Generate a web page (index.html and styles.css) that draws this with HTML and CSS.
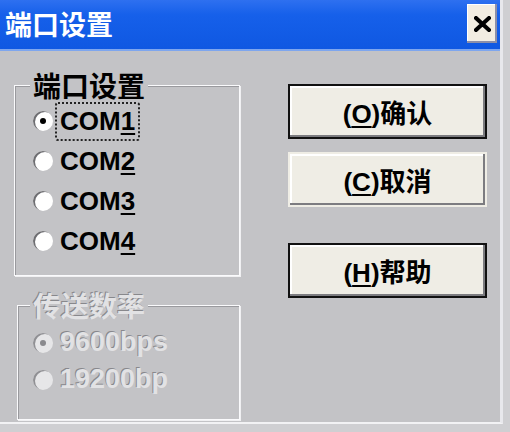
FILE: index.html
```html
<!DOCTYPE html>
<html lang="zh">
<head>
  <meta charset="UTF-8" />
  <title>端口设置</title>
  <link rel="stylesheet" href="styles.css">
</head>
<body>
  <div class="window">
    <div class="titlebar">
      <span class="title">端口设置</span>
      <button class="close" aria-label="关闭">
        <svg width="17" height="16" viewBox="0 0 17 16"><path d="M2 2 L15 14 M15 2 L2 14" stroke="#000" stroke-width="4" stroke-linecap="square"/></svg>
      </button>
    </div>

    <div class="client">
      <div class="groups">
        <fieldset class="group ports">
          <legend>端口设置</legend>
          <label class="opt"><span class="radio checked"></span><span class="text focus">COM<u>1</u></span></label>
          <label class="opt"><span class="radio"></span><span class="text">COM<u>2</u></span></label>
          <label class="opt"><span class="radio"></span><span class="text">COM<u>3</u></span></label>
          <label class="opt"><span class="radio"></span><span class="text">COM<u>4</u></span></label>
        </fieldset>

        <fieldset class="group rates disabled">
          <legend>传送数率</legend>
          <label class="opt"><span class="radio checked"></span><span class="text">9600bps</span></label>
          <label class="opt"><span class="radio"></span><span class="text">19200bp</span></label>
        </fieldset>
      </div>

      <div class="buttons">
        <button class="btn dark">(<u>O</u>)确认</button>
        <button class="btn">(<u>C</u>)取消</button>
        <button class="btn dark help">(<u>H</u>)帮助</button>
      </div>
    </div>
  </div>
</body>
</html>
```

FILE: styles.css
```css
* {
  box-sizing: border-box;
}
body {
  margin: 0;
  background: #cfcfd2;
  font-family: 'Liberation Sans', 'Noto Sans CJK SC', sans-serif;
  font-weight: 700;
  color: #000;
}
.window {
  width: 503px;
  height: 424px;
  background: #c3c3c6;
  border-right: 3px solid #e8e8ec;
  border-bottom: 2px solid #f2f2f4;
}
.titlebar {
  height: 51px;
  display: flex;
  align-items: flex-start;
  justify-content: space-between;
  background: linear-gradient(#2e70f0, #1660ea 30%, #0f58e2);
  border-bottom: 2px solid #7ea6ee;
  padding: 4px 3px 0 5px;
}
.title {
  color: #fff;
  font-family: 'Noto Sans CJK SC', sans-serif;
  font-size: 27px;
  line-height: 40px;
  font-weight: 700;
}
.close {
  width: 30px;
  height: 39px;
  padding: 0;
  border: none;
  background: #f2ede2;
  box-shadow: inset -2px -2px 0 #8c8fa8, inset 1px 1px 0 #fff;
  display: flex;
  align-items: center;
  justify-content: center;
}
.client {
  display: flex;
  padding-left: 14px;
}
.groups {
  width: 226px;
  padding-top: 19px;
}
.group {
  margin: 0;
  border: 1px solid #fafafc;
  box-shadow: inset 1px 1px 0 #9a9a9e, 1px 1px 0 #f0f0f2;
  padding: 1px 0 14px 18px;
}
.group legend {
  font-family: 'Noto Sans CJK SC', sans-serif;
  font-size: 28px;
  line-height: 30px;
  padding: 0 3px;
  margin-left: -3px;
  background: #c3c3c6;
}
.rates {
  margin: 15px 0 0 3px;
  padding: 5px 0 21px 15px;
}
.rates legend {
  line-height: 28px;
}
.opt {
  display: flex;
  align-items: center;
  height: 40px;
  gap: 2px;
  font-size: 26px;
}
.rates .opt {
  height: 37px;
  font-size: 27px;
}
.radio {
  width: 20px;
  height: 20px;
  border-radius: 50%;
  background: #fff;
  box-shadow: inset 2px 1px 0 #6e6e72;
  display: flex;
  align-items: center;
  justify-content: center;
}
.radio.checked::after {
  content: '';
  width: 6px;
  height: 6px;
  border-radius: 50%;
  background: #000;
}
.text {
  height: 39px;
  line-height: 35px;
  padding: 0 3px;
  border: 2px dotted transparent;
}
.text u {
  text-underline-offset: 3px;
  text-decoration-thickness: 2px;
}
.text.focus {
  border-color: #222;
  border-radius: 3px;
}
.disabled legend,
.disabled .text {
  color: #e2e2e4;
  text-shadow: -1px -1px 0 #88888c;
}
.disabled .radio {
  background: #e6e6e8;
  box-shadow: inset 2px 1px 0 #909094;
}
.disabled .radio.checked::after {
  background: #8a8a8e;
}
.buttons {
  display: flex;
  flex-direction: column;
  gap: 13px;
  margin-left: 48px;
  padding-top: 33px;
}
.btn {
  width: 199px;
  height: 55px;
  padding: 0;
  border: 2px solid transparent;
  background: #efede5;
  box-shadow: inset -2px -2px 0 #7c7c80, inset 2px 2px 0 #fff;
  font-family: 'Liberation Sans', 'Noto Sans CJK SC', sans-serif;
  font-weight: 700;
  font-size: 26px;
  color: #000;
}
.btn.dark {
  border-color: #111;
}
.btn u {
  text-underline-offset: 3px;
  text-decoration-thickness: 2px;
}
.help {
  margin-top: 23px;
}
```
